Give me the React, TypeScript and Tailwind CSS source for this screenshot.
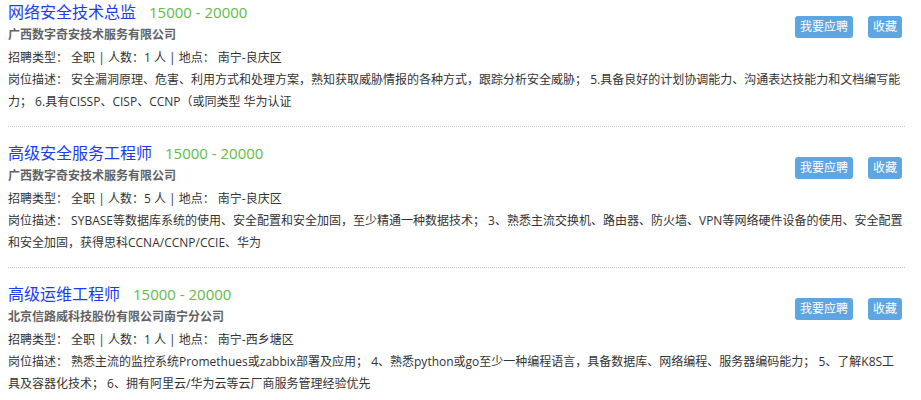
import React from "react";

type Job = {
  title: string;
  salary: string;
  company: string;
  type: string;
  count: number;
  place: string;
  desc: string;
};

const jobs: Job[] = [
  {
    title: "网络安全技术总监",
    salary: "15000 - 20000",
    company: "广西数字奇安技术服务有限公司",
    type: "全职",
    count: 1,
    place: "南宁-良庆区",
    desc: "安全漏洞原理、危害、利用方式和处理方案，熟知获取威胁情报的各种方式，跟踪分析安全威胁； 5.具备良好的计划协调能力、沟通表达技能力和文档编写能力； 6.具有CISSP、CISP、CCNP（或同类型 华为认证",
  },
  {
    title: "高级安全服务工程师",
    salary: "15000 - 20000",
    company: "广西数字奇安技术服务有限公司",
    type: "全职",
    count: 5,
    place: "南宁-良庆区",
    desc: "SYBASE等数据库系统的使用、安全配置和安全加固，至少精通一种数据技术； 3、熟悉主流交换机、路由器、防火墙、VPN等网络硬件设备的使用、安全配置和安全加固，获得思科CCNA/CCNP/CCIE、华为",
  },
  {
    title: "高级运维工程师",
    salary: "15000 - 20000",
    company: "北京信路威科技股份有限公司南宁分公司",
    type: "全职",
    count: 1,
    place: "南宁-西乡塘区",
    desc: "熟悉主流的监控系统Promethues或zabbix部署及应用； 4、熟悉python或go至少一种编程语言，具备数据库、网络编程、服务器编码能力； 5、了解K8S工具及容器化技术； 6、拥有阿里云/华为云等云厂商服务管理经验优先",
  },
];

function JobItem({ job }: { job: Job }) {
  return (
    <div className="border-b border-dotted border-[#c8c8c8] pt-[14px] pb-[13px]">
      <div className="flex items-start justify-between">
        <div>
          <div className="flex items-center h-6">
            <span className="text-[16px] text-[#1c3cf4]">{job.title}</span>
            <span className="ml-[13px] text-[15px] text-[#62bb47]">{job.salary}</span>
          </div>
          <div className="h-[23px] leading-[22px] text-[12px] font-bold text-[#636363]">{job.company}</div>
        </div>
        <div className="flex gap-[15px] mt-[16px] mr-[3px]">
          <button className="h-[22px] px-[5px] rounded-[3px] bg-[#5ea6e2] text-white text-[12px] leading-[22px]">
            我要应聘
          </button>
          <button className="h-[22px] px-[5px] rounded-[3px] bg-[#5ea6e2] text-white text-[12px] leading-[22px]">
            收藏
          </button>
        </div>
      </div>
      <div className="h-[22px] leading-[22px] text-[12px] text-[#333]">
        {`招聘类型： ${job.type} | 人数：${job.count} 人 | 地点： ${job.place}`}
      </div>
      <p className="h-[44px] leading-[22px] text-[12px] text-[#333] overflow-hidden">
        {`岗位描述： ${job.desc}`}
      </p>
    </div>
  );
}

export default function App() {
  return (
    <div className="h-[400px] overflow-hidden bg-white font-['Open_Sans','Noto_Sans_CJK_SC',sans-serif]">
      <div className="-mt-[14px] pl-2 pr-4">
        {jobs.map((job) => (
          <JobItem key={job.title} job={job} />
        ))}
      </div>
    </div>
  );
}
